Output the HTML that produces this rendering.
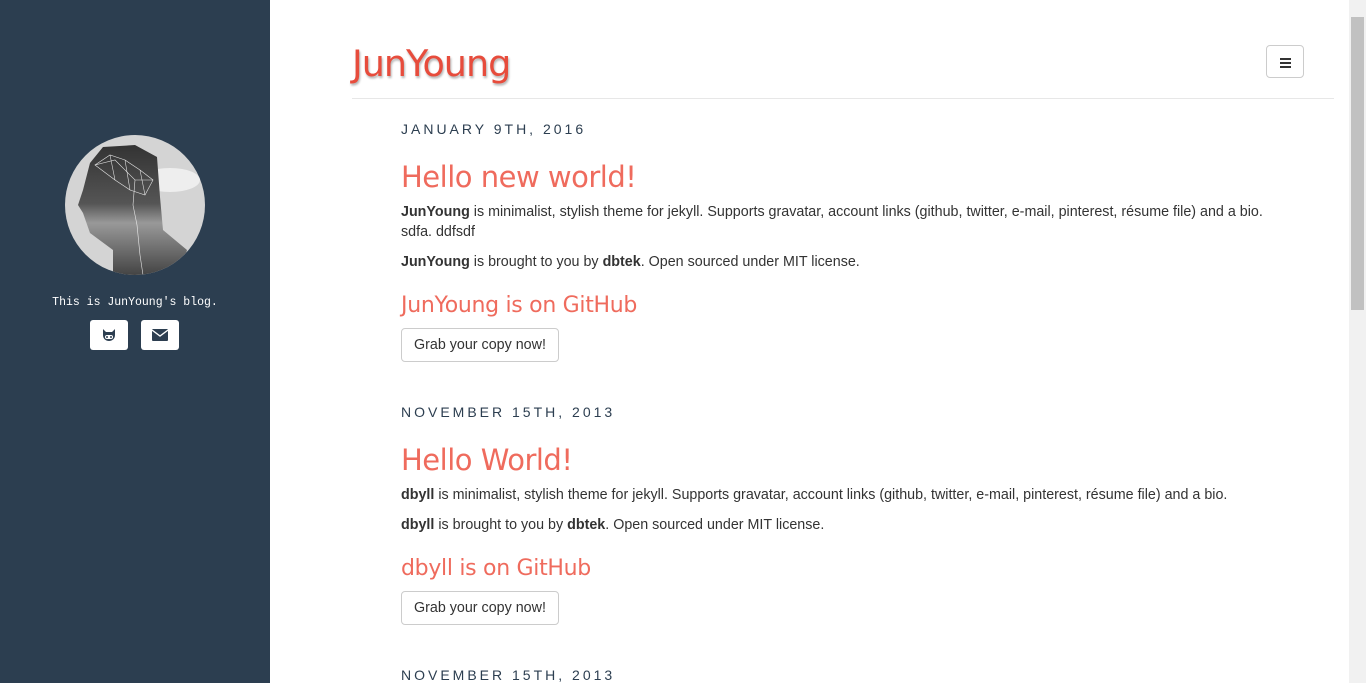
<!DOCTYPE html>
<html><head><meta charset="utf-8"><style>
*{box-sizing:border-box;margin:0;padding:0}
body{width:1366px;height:683px;overflow:hidden;font-family:"Liberation Sans",Arial,sans-serif;background:#fff;position:relative;color:#333}
.side{position:absolute;left:0;top:0;width:270px;height:683px;background:#2c3e50}
.av{position:absolute;left:65px;top:135px;width:140px;height:140px}
.tag{position:absolute;left:0;width:270px;top:296px;text-align:center;color:#fff;font-family:"Liberation Mono",monospace;font-size:11.5px}
.ib{position:absolute;top:320px;width:38px;height:30px;background:#fff;border-radius:3px;display:flex;align-items:center;justify-content:center}
.main{position:absolute;left:352px;top:0;width:982px}
.logo{position:absolute;left:0;top:42px;font-family:"DejaVu Sans",sans-serif;font-size:36.5px;color:#e74c3c;text-shadow:1px 2px 2px rgba(0,0,0,.3);letter-spacing:-1px}
.hr{position:absolute;left:0;top:98px;width:982px;height:1px;background:#e7e7e7}
.menu{position:absolute;left:914px;top:45px;width:38px;height:33px;border:1px solid #ccc;border-radius:4px}
.menu i{position:absolute;left:13px;width:11px;height:2px;background:#333}
.p{position:absolute;left:49px;width:900px}
.date{font-size:14px;letter-spacing:3px;color:#2c3e50}
h2{font-family:"DejaVu Sans",sans-serif;font-weight:normal;color:#ef6b5d;font-size:29px;letter-spacing:-0.5px}
h3{font-family:"DejaVu Sans",sans-serif;font-weight:normal;color:#ef6b5d;font-size:22px;letter-spacing:-0.3px}
.t{font-size:14.3px;line-height:20px;color:#333}
.btn{display:inline-block;border:1px solid #ccc;border-radius:4px;padding:0 12px;height:34px;line-height:32px;font-size:14.3px;color:#333}
.sb{position:absolute;left:1349px;top:0;width:17px;height:683px;background:#f1f1f1}
.sb .th{position:absolute;left:2px;top:17px;width:13px;height:293px;background:#c1c1c1}
</style></head><body>
<div class="side">
<svg class="av" viewBox="0 0 140 140"><defs><clipPath id="c"><circle cx="70" cy="70" r="70"/></clipPath><linearGradient id="g" x1="0" y1="0" x2="0" y2="1"><stop offset="0" stop-color="#333"/><stop offset=".45" stop-color="#555"/><stop offset=".6" stop-color="#999"/><stop offset="1" stop-color="#444"/></linearGradient></defs>
<g clip-path="url(#c)"><rect width="140" height="140" fill="#d4d4d4"/><ellipse cx="105" cy="45" rx="30" ry="12" fill="#eee"/>
<path d="M38 12 L70 10 L92 22 L95 62 L98 95 L122 115 L115 140 L48 140 L48 115 L25 98 L18 78 L13 70 L18 55 L25 28 Z" fill="url(#g)"/>
<g stroke="#fff" stroke-width=".6" fill="none" opacity=".85"><path d="M30 30 L45 20 L60 25 L75 35 L88 45 L80 60 L65 55 L50 45 L30 30 L50 25 L70 45 L88 45 M45 20 L50 45 M60 25 L65 55 M75 35 L80 60 M70 45 L68 70 L72 90 L75 120 L78 140"/></g></g></svg>
<div class="tag">This is JunYoung's blog.</div>
<div class="ib" style="left:90px"><svg width="16" height="14" viewBox="0 0 16 14"><path d="M2 1l3 3h6l3-3v6c0 4-3 6-6 6s-6-2-6-6z" fill="#2c3e50"/><rect x="4" y="7" width="8" height="4" rx="2" fill="#fff"/><circle cx="6" cy="9" r="1" fill="#2c3e50"/><circle cx="10" cy="9" r="1" fill="#2c3e50"/></svg></div>
<div class="ib" style="left:141px"><svg width="16" height="12" viewBox="0 0 16 12"><rect width="16" height="12" rx="1" fill="#2c3e50"/><path d="M0 1l8 6 8-6" stroke="#fff" stroke-width="1.3" fill="none"/></svg></div>
</div>
<div class="main">
<div class="logo">JunYoung</div>
<div class="menu"><i style="top:12px"></i><i style="top:16px"></i><i style="top:20px"></i></div>
<div class="hr"></div>
<div class="p" style="top:121px"><div class="date">JANUARY 9TH, 2016</div></div>
<div class="p" style="top:160px"><h2>Hello new world!</h2></div>
<div class="p t" style="top:202px"><b>JunYoung</b> is minimalist, stylish theme for jekyll. Supports gravatar, account links (github, twitter, e-mail, pinterest, résume file) and a bio.<br>sdfa. ddfsdf</div>
<div class="p t" style="top:252px"><b>JunYoung</b> is brought to you by <b>dbtek</b>. Open sourced under MIT license.</div>
<div class="p" style="top:293px"><h3>JunYoung is on GitHub</h3></div>
<div class="p" style="top:328px"><span class="btn">Grab your copy now!</span></div>
<div class="p" style="top:404px"><div class="date">NOVEMBER 15TH, 2013</div></div>
<div class="p" style="top:443px"><h2>Hello World!</h2></div>
<div class="p t" style="top:485px"><b>dbyll</b> is minimalist, stylish theme for jekyll. Supports gravatar, account links (github, twitter, e-mail, pinterest, résume file) and a bio.</div>
<div class="p t" style="top:515px"><b>dbyll</b> is brought to you by <b>dbtek</b>. Open sourced under MIT license.</div>
<div class="p" style="top:556px"><h3>dbyll is on GitHub</h3></div>
<div class="p" style="top:591px"><span class="btn">Grab your copy now!</span></div>
<div class="p" style="top:667px"><div class="date">NOVEMBER 15TH, 2013</div></div>
</div>
<div class="sb"><div class="th"></div></div>
</body></html>
